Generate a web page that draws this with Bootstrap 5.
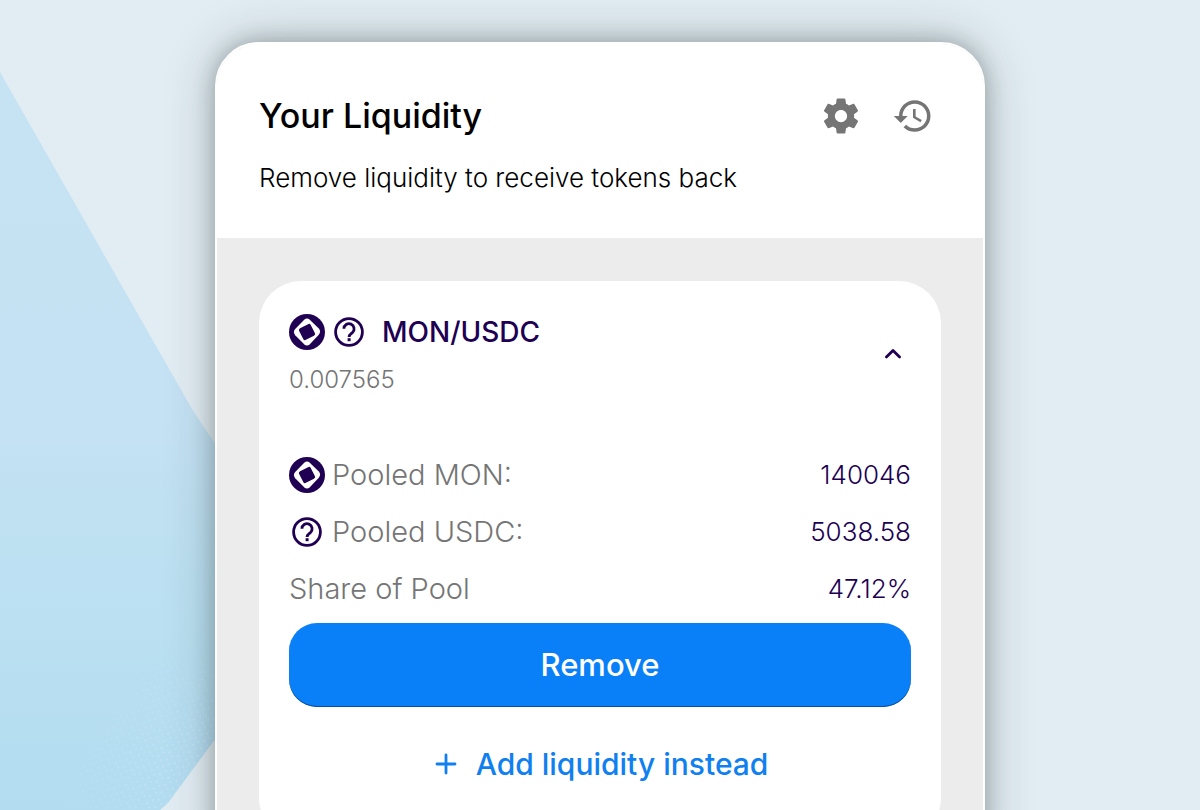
<!DOCTYPE html>
<html lang="en">
<head>
<meta charset="utf-8">
<meta name="viewport" content="width=device-width, initial-scale=1">
<title>Your Liquidity</title>
<link href="https://cdn.jsdelivr.net/npm/bootstrap@5.3.0/dist/css/bootstrap.min.css" rel="stylesheet">
<style>
  :root { --ink: #200052; --muted: #757575; --accent: #0a80f8; }
  body { background: #e2edf3; font-family: Inter, "Liberation Sans", sans-serif; color: #000; }
  .page { height: 100vh; overflow-y: auto; scrollbar-width: none; padding: 42px 16px; isolation: isolate; }
  .backdrop { z-index: -1; }
  .panel {
    max-width: 770px; min-height: 100%; background: #ececec; border: 2px solid #fff; border-radius: 44px; overflow: hidden;
    box-shadow: 0 0 20px rgba(30, 40, 40, .25), 0 0 50px rgba(30, 40, 40, .28);
  }
  .panel-head { padding: 44px 42px 40px; }
  .panel-title { font-size: 34px; line-height: 56px; font-weight: 500; }
  .panel-sub { font-size: 26px; line-height: 40px; font-weight: 300; margin-top: 14px; }
  .icon-btn { width: 56px; height: 56px; color: var(--muted); }
  .panel-body { padding: 43px 42px; }
  .pool { border-radius: 42px; padding: 31px 30px 48px; }
  .token { width: 36px; height: 36px; color: var(--ink); flex: none; }
  .pair-row { gap: 6px; }
  .pair { font-size: 28px; line-height: 40px; font-weight: 500; color: var(--ink); margin-left: 9px; }
  .rate { font-size: 24px; line-height: 36px; font-weight: 300; color: var(--muted); margin-top: 10px; }
  .toggle { width: 36px; height: 36px; color: var(--ink); }
  .pool-rows { margin: 48px 0 6px; }
  .pool-line { height: 57px; }
  .pool-line dt { font-size: 29px; font-weight: 300; color: var(--muted); gap: 7px; }
  .pool-line dd { font-size: 26px; font-weight: 300; color: var(--ink); }
  .btn-remove {
    height: 84px; border-radius: 28px; font-size: 31px; font-weight: 500;
    --bs-btn-color: #fff; --bs-btn-bg: var(--accent); --bs-btn-hover-color: #fff; --bs-btn-hover-bg: #0874e2;
    box-shadow: inset 0 -1px 0 #0a4f9c;
  }
  .add-link { font-size: 30px; line-height: 56px; font-weight: 500; color: #107ff0; margin-top: 29px; }
</style>
</head>
<body>
<svg width="0" height="0" class="position-absolute" aria-hidden="true">
  <symbol id="mon" viewBox="0 0 36 36">
    <circle cx="18" cy="18" r="18" fill="currentColor"/>
    <path d="M15.200 5.800Q18 3.400 20.800 5.800L29.800 14.600Q32.400 17.600 29.800 20.800L20.800 30.200Q18 32.600 15.200 30.200L6.200 21.200Q3.600 18 6.200 15Z" fill="#fff"/>
    <rect x="11.500" y="11.500" width="13" height="13" rx="2" transform="rotate(-27 18 18)" fill="currentColor"/>
  </symbol>
  <symbol id="unknown" viewBox="0 0 36 36">
    <circle cx="18" cy="18" r="13.400" fill="none" stroke="currentColor" stroke-width="2.800"/>
    <path d="M12.900 14.800a5.100 5.100 0 1 1 8.600 3.700c-1.800 1.600-3.400 2.400-3.400 4.400" fill="none" stroke="currentColor" stroke-width="2.800"/>
    <path d="M16.600 24.200h3v3h-3z" fill="currentColor"/>
  </symbol>
</svg>

<main class="page position-relative">
  <svg class="backdrop position-absolute top-0 start-0" width="300" height="810" viewBox="0 0 300 810" aria-hidden="true">
    <defs>
      <linearGradient id="sky" x1="0" y1="0" x2="0" y2="1">
        <stop offset="0" stop-color="#c6e3f3"/><stop offset=".45" stop-color="#c5e2f4"/>
        <stop offset=".75" stop-color="#bae0f1"/><stop offset="1" stop-color="#b3dcf1"/>
      </linearGradient>
      <pattern id="grain" width="9" height="8" patternUnits="userSpaceOnUse" patternTransform="rotate(24)">
        <circle cx="2" cy="2" r=".8" fill="#d9effa"/><circle cx="6" cy="5" r=".7" fill="#d9effa"/>
      </pattern>
      <radialGradient id="fade" cx="230" cy="790" r="190" gradientUnits="userSpaceOnUse">
        <stop offset="0" stop-color="#fff"/><stop offset=".4" stop-color="#bbb"/><stop offset="1" stop-color="#000"/>
      </radialGradient>
      <mask id="soft"><rect width="300" height="810" fill="url(#fade)"/></mask>
    </defs>
    <path d="M0 72L188 402C200 422 208 434 222 452V732L213 742L168 803L160 810H0Z" fill="url(#sky)"/>
    <path d="M222 560V732L213 742L168 803L160 810H50Z" fill="url(#grain)" mask="url(#soft)"/>
  </svg>

  <section class="panel mx-auto">
    <header class="panel-head bg-white">
      <div class="d-flex align-items-center justify-content-between">
        <h1 class="panel-title mb-0">Your Liquidity</h1>
        <div class="d-flex gap-3">
          <button type="button" class="icon-btn btn border-0 p-0 d-flex align-items-center justify-content-center" aria-label="Settings">
            <svg width="42" height="42" viewBox="0 0 24 24" fill="currentColor"><path d="M19.43 12.98c.04-.32.07-.64.07-.98s-.03-.66-.07-.98l2.11-1.65c.19-.15.24-.42.12-.64l-2-3.46c-.12-.22-.39-.3-.61-.22l-2.490 1c-.52-.4-1.08-.73-1.69-.98l-.38-2.650C14.460 2.180 14.250 2 14 2h-4c-.25 0-.46.18-.49.42l-.38 2.650c-.61.25-1.170.59-1.690.98l-2.490-1c-.23-.09-.49 0-.61.22l-2 3.460c-.13.22-.07.49.12.64l2.110 1.650c-.04.32-.07.65-.07.98s.03.66.07.98l-2.110 1.650c-.19.15-.24.42-.12.64l2 3.460c.12.22.39.3.61.22l2.490-1c.52.4 1.080.73 1.690.98l.38 2.650c.03.24.24.42.49.42h4c.25 0 .46-.18.49-.42l.38-2.650c.61-.25 1.170-.59 1.690-.98l2.490 1c.23.09.49 0 .61-.22l2-3.460c.12-.22.07-.49-.12-.64l-2.110-1.650zM12 15.500c-1.930 0-3.500-1.570-3.500-3.500s1.570-3.500 3.500-3.500 3.500 1.570 3.500 3.500-1.570 3.500-3.500 3.500z"/></svg>
          </button>
          <button type="button" class="icon-btn btn border-0 p-0 d-flex align-items-center justify-content-center" aria-label="History">
            <svg width="42" height="42" viewBox="0 0 24 24" fill="currentColor"><path d="M13 3c-4.970 0-9 4.030-9 9H1l3.890 3.890.07.14L9 12H6c0-3.870 3.130-7 7-7s7 3.130 7 7-3.130 7-7 7c-1.930 0-3.680-.79-4.940-2.060l-1.420 1.420C8.270 19.990 10.510 21 13 21c4.970 0 9-4.030 9-9s-4.030-9-9-9zm-1 5v5l4.280 2.540.72-1.210-3.500-2.080V8H12z"/></svg>
          </button>
        </div>
      </div>
      <p class="panel-sub mb-0">Remove liquidity to receive tokens back</p>
    </header>

    <div class="panel-body">
      <article class="pool bg-white">
        <div class="d-flex align-items-center justify-content-between">
          <div>
            <div class="pair-row d-flex align-items-center">
              <svg class="token"><use href="#mon"/></svg>
              <svg class="token"><use href="#unknown"/></svg>
              <h2 class="pair mb-0">MON/USDC</h2>
            </div>
            <p class="rate mb-0">0.007565</p>
          </div>
          <button type="button" class="toggle btn border-0 p-0 d-flex align-items-center justify-content-center" aria-label="Collapse pool" aria-expanded="true">
            <svg width="20" height="14" viewBox="0 0 20 14" fill="none" stroke="currentColor" stroke-width="2.800" stroke-linecap="round" stroke-linejoin="round"><path d="M3.400 9L10 2.400L16.600 9"/></svg>
          </button>
        </div>

        <dl class="pool-rows">
          <div class="pool-line d-flex align-items-center justify-content-between">
            <dt class="d-flex align-items-center"><svg class="token"><use href="#mon"/></svg>Pooled MON:</dt>
            <dd class="mb-0">140046</dd>
          </div>
          <div class="pool-line d-flex align-items-center justify-content-between">
            <dt class="d-flex align-items-center"><svg class="token"><use href="#unknown"/></svg>Pooled USDC:</dt>
            <dd class="mb-0">5038.58</dd>
          </div>
          <div class="pool-line d-flex align-items-center justify-content-between">
            <dt>Share of Pool</dt>
            <dd class="mb-0">47.12%</dd>
          </div>
        </dl>

        <button type="button" class="btn-remove btn w-100 border-0">Remove</button>
        <a href="#" class="add-link d-flex align-items-center justify-content-center gap-3 text-decoration-none">
          <svg width="28" height="28" viewBox="0 0 28 28" fill="none" stroke="currentColor" stroke-width="2.800" stroke-linecap="round" aria-hidden="true"><path d="M14 5v18M5 14h18"/></svg>
          Add liquidity instead
        </a>
      </article>
    </div>
  </section>
</main>
<script src="https://cdn.jsdelivr.net/npm/bootstrap@5.3.0/dist/js/bootstrap.bundle.min.js"></script>
</body>
</html>
